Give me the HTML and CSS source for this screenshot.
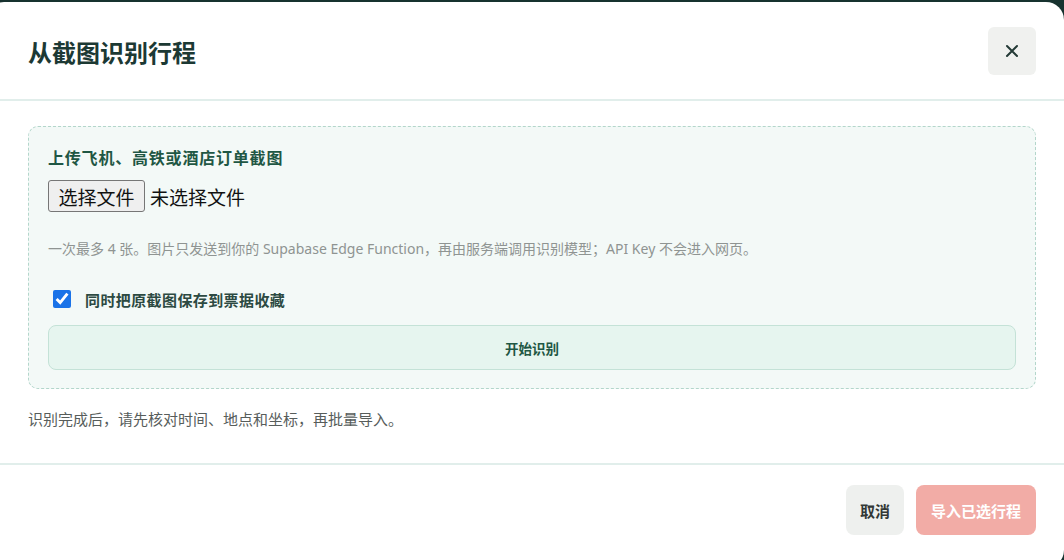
FILE: index.html
```html
<!DOCTYPE html>
<html lang="zh-CN">
<head>
<meta charset="utf-8">
<title>从截图识别行程</title>
<link rel="stylesheet" href="styles.css">
</head>
<body>
<div class="modal">
  <header class="modal-header">
    <h2 class="modal-title">从截图识别行程</h2>
    <button class="close-btn" aria-label="关闭">
      <svg width="16" height="16" viewBox="0 0 16 16"><path d="M3 3 L13 13 M13 3 L3 13" stroke="#243a36" stroke-width="2" stroke-linecap="round" fill="none"/></svg>
    </button>
  </header>
  <div class="modal-body">
    <div class="upload-box">
      <div class="upload-label">上传飞机、高铁或酒店订单截图</div>
      <div class="file-row">
        <span class="file-btn">选择文件</span>
        <span class="file-name">未选择文件</span>
      </div>
      <p class="hint">一次最多 4 张。图片只发送到你的 Supabase Edge Function，再由服务端调用识别模型；API Key 不会进入网页。</p>
      <label class="check-row">
        <input type="checkbox" class="check" checked>
        <span>同时把原截图保存到票据收藏</span>
      </label>
      <button class="start-btn">开始识别</button>
    </div>
    <p class="note">识别完成后，请先核对时间、地点和坐标，再批量导入。</p>
  </div>
  <footer class="modal-footer">
    <button class="btn btn-cancel">取消</button>
    <button class="btn btn-import" disabled>导入已选行程</button>
  </footer>
</div>
</body>
</html>
```

FILE: styles.css
```css
html, body {
  margin: 0;
  padding: 0;
  height: 100%;
  overflow: hidden;
}
body {
  background: #17322f;
  font-family: "Noto Sans", "Noto Sans CJK SC", sans-serif;
}
.modal {
  margin: 2px 0 0 -14px;
  width: 1078px;
  height: 566px;
  background: #ffffff;
  border-radius: 18px;
  display: flex;
  flex-direction: column;
}
.modal-header {
  display: flex;
  align-items: center;
  justify-content: space-between;
  padding: 25px 28px 24px 42px;
  border-bottom: 2px solid #e1eeeb;
}
.modal-title {
  margin: 0;
  font-size: 24px;
  font-weight: 700;
  color: #1c3934;
}
.close-btn {
  width: 48px;
  height: 48px;
  border: none;
  border-radius: 6px;
  background: #f0f1ef;
  display: flex;
  align-items: center;
  justify-content: center;
  padding: 0;
}
.modal-body {
  padding: 25px 28px 0 42px;
  border-bottom: 2px solid #e1eeeb;
  height: 364px;
  box-sizing: border-box;
}
.upload-box {
  background: #f3f9f7;
  border: 1px dashed #b3d6cb;
  border-radius: 10px;
  padding: 20px 19px 18px 19px;
  height: 263px;
  box-sizing: border-box;
  display: flex;
  flex-direction: column;
}
.upload-label {
  font-size: 16px;
  font-weight: 700;
  color: #1f5744;
  line-height: 22px;
  letter-spacing: 0.8px;
}
.file-row {
  display: flex;
  align-items: center;
  margin-top: 11px;
  height: 32px;
  font-family: "Noto Sans CJK SC", sans-serif;
  font-size: 19px;
  color: #111;
}
.file-btn {
  box-sizing: border-box;
  height: 32px;
  width: 97px;
  display: flex;
  align-items: center;
  justify-content: center;
  background: #efefef;
  border: 1px solid #767676;
  border-radius: 3px;
  margin-right: 5px;
}
.hint {
  margin: 27px 0 0;
  font-size: 14px;
  line-height: 20px;
  color: #8f9492;
}
.check-row {
  display: flex;
  align-items: center;
  margin-top: 30px;
  height: 20px;
  font-size: 15px;
  font-weight: 700;
  color: #2c4a42;
  letter-spacing: 0.4px;
}
.check {
  width: 18px;
  height: 18px;
  margin: 0 14px 0 5px;
  accent-color: #1a73e8;
}
.start-btn {
  margin-top: 16px;
  height: 45px;
  border: 1px solid #c4e2d7;
  border-radius: 8px;
  background: #e6f5ef;
  font-family: inherit;
  font-size: 13.5px;
  font-weight: 700;
  color: #1f5744;
}
.note {
  margin: 19px 0 0;
  font-size: 15px;
  line-height: 22px;
  color: #575d5b;
}
.modal-footer {
  display: flex;
  justify-content: flex-end;
  gap: 12px;
  padding: 20px 28px;
}
.btn {
  height: 50px;
  border: none;
  border-radius: 8px;
  font-family: inherit;
  font-size: 15px;
  font-weight: 700;
  padding: 0 14px;
}
.btn-cancel {
  background: #eef0ee;
  color: #333836;
}
.btn-import {
  background: #f2aca6;
  color: #ffffff;
  padding: 0 15px;
}
```
